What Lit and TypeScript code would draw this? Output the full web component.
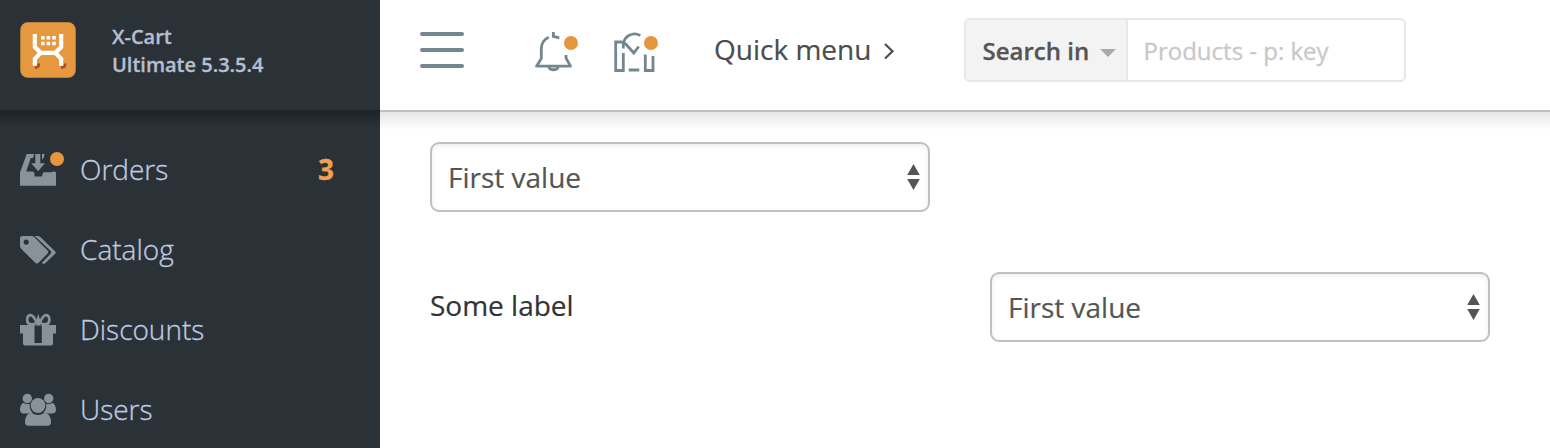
import { LitElement, html, css, svg } from "lit";
import { customElement, property } from "lit/decorators.js";

const icons: Record<string, unknown> = {
  orders: svg`
    <path d="M6.700 3H14.300L13 7H10.800L6.200 20.600H12.800L14.500 22V25.500H21.800L23.300 21.300H31L34.500 20.300L36 21.500V34.800H0V21.500Z"/>
    <path d="M15.300 3H20.300V12.300H24.800L18.200 20.300L11.200 12.300H15.300Z" />
    <path d="M22 3H24.600L23.600 7L22.700 8.300H22Z"/>`,
  catalog: svg`
    <path fill-rule="evenodd" d="M2.200 5H11.500Q13 5 14.200 6L27.500 19.600Q29 21 27.600 22.600L18.300 32Q17 33.200 15.500 31.900L1.600 18.300Q0 16.600 0 15V7.200Q0 5 2.200 5ZM6.200 8.500a2.600 2.600 0 1 0 .01 0Z"/>
    <path d="M14.700 5H17.500Q19.400 5 20.600 6.200L34.700 19.900Q36.700 21.500 34.900 23.100L25.300 32.300Q23.500 33.800 21.800 31.800L30.500 23Q32 21.300 30.500 19.800Z" />`,
  discounts: svg`
    <path fill-rule="evenodd" d="M0 14H36V22.500H33V32.500Q33 34.600 31 34.600H5Q3 34.600 3 32.500V22.500H0ZM14.500 14.600V32H21.800V14.600Z"/>
    <path d="M18.300 13.700C15 8.500 13.600 4.200 10.600 4.200C6.200 4.200 5.900 12.700 10.400 13.100C14.800 13.700 17 12.500 18.300 7.600C19.800 12.500 21.800 13.700 26.200 13.100C30.600 12.700 30.300 4.200 25.900 4.200C22.900 4.200 21.500 8.500 18.300 13.700" fill="none" stroke="currentColor" stroke-width="2.700"/>`,
  users: svg`
    <circle cx="7.300" cy="7.500" r="4.700"/><circle cx="28.700" cy="7.500" r="4.700"/>
    <path d="M3.200 11.800Q7 14 9.700 12.500Q9 19 12.800 21.400Q11 21.600 9.800 22.400H3Q0 21.800 0 18.800Q.2 13.700 3.200 11.800ZM32.800 11.800Q29 14 26.300 12.500Q27 19 23.200 21.400Q25 21.600 26.200 22.400H33Q36 21.800 36 18.800Q35.800 13.700 32.800 11.800Z"/>
    <circle cx="18" cy="14.500" r="7.400"/>
    <path d="M11.500 21.700Q18 26.200 24.500 21.700Q31 22.500 31 31.500Q31 34.800 27 34.800H9Q5 34.800 5 31.500Q5 22.500 11.500 21.700Z"/>`,
};

@customElement("menu-item")
class MenuItem extends LitElement {
  @property() label = "";
  @property() icon = "";
  @property() badge = "";
  static styles = css`
    :host { display: flex; align-items: center; height: 80px; padding: 0 46px 0 20px; color: #c0cbe0; }
    svg { width: 44px; height: 40px; flex: none; color: #8a9299; fill: currentColor; margin-right: 16px; overflow: visible; }
    .label { flex: 1; font-size: 28px; line-height: 40px; font-weight: 300; padding-bottom: 2px; -webkit-text-stroke: .3px #c0cbe0; }
    .badge { color: #f0a04f; font-size: 28px; line-height: 40px; font-weight: 700; padding-bottom: 2px; -webkit-text-stroke: .3px #f0a04f; }
    .dot { fill: #e5963e; }
  `;
  render() {
    return html`<svg viewBox="0 0 44 40"><g transform="translate(0 1)">${icons[this.icon]}</g>
        ${this.badge ? svg`<circle class="dot" cx="37" cy="9" r="7"/>` : ""}</svg>
      <span class="label">${this.label}</span>
      ${this.badge ? html`<span class="badge">${this.badge}</span>` : ""}`;
  }
}

@customElement("value-select")
class ValueSelect extends LitElement {
  static styles = css`
    :host { box-sizing: border-box; display: flex; align-items: center; justify-content: space-between; width: 500px; height: 70px; padding: 0 7px 0 16px; border: 2px solid #c0c0c0; border-radius: 9px; background: #fff; box-shadow: inset 0 2px 5px rgba(0,0,0,.08); font-size: 28px; color: #555; -webkit-text-stroke: .2px #555; }
    svg { width: 14px; height: 28px; fill: #555; }
  `;
  render() {
    return html`<span>First value</span><svg viewBox="0 0 14 28"><path d="M.2 12L6.500 1L12.800 12ZM.2 16H12.800L6.500 27Z"/></svg>`;
  }
}

@customElement("app-root")
class AppRoot extends LitElement {
  static styles = css`
    :host { display: grid; grid-template-columns: 380px 1fr; height: 448px; overflow: hidden; background: #fff; font-family: "Open Sans", sans-serif; }
    aside { background: #2a3238; }
    .brand { display: flex; height: 110px; box-sizing: border-box; padding: 22px 20px 0; color: #b5bfd1; }
    .logo { width: 56px; height: 56px; flex: none; }
    .name { margin: 1px 0 0 36px; font-size: 20px; line-height: 28px; font-weight: 600; -webkit-text-stroke: .3px #b5bfd1; }
    .shade { height: 20px; background: linear-gradient(#1d2326, #222a2e 40%, #2a3238 90%); }
    header { display: flex; align-items: flex-start; height: 112px; box-sizing: border-box; border-bottom: 2px solid #c0c0c0; padding-left: 40px; }
    .burger { display: grid; gap: 12px; margin-top: 32px; width: 44px; }
    .burger i { height: 4px; border-radius: 2px; background: #748791; }
    .alerts { width: 130px; height: 50px; margin: 28px 0 0 66px; fill: none; stroke: #748791; stroke-width: 2.800; }
    .dot { fill: #e5963e; stroke: none; }
    .quick { margin: 29px 0 0 54px; font-size: 28px; line-height: 40px; color: #4c4c4c; white-space: nowrap; width: 158px; -webkit-text-stroke: .2px #4c4c4c; }
    .chev { width: 12px; height: 20px; margin: 41px 0 0 11px; fill: none; stroke: #4c4c4c; stroke-width: 2.200; }
    .search { display: flex; box-sizing: border-box; width: 442px; height: 64px; margin: 18px 0 0 69px; border: 2px solid #e7e7e7; border-radius: 6px; font-size: 24px; line-height: 60px; }
    .scope { display: flex; align-items: center; box-sizing: border-box; width: 162px; flex: none; padding: 1px 0 0 16.5px; border-right: 2px solid #e7e7e7; background: #f3f3f3; color: #555; font-weight: 600; border-radius: 4px 0 0 4px; white-space: nowrap; height: 60px; -webkit-text-stroke: .3px #555; }
    .caret { width: 16px; height: 8px; margin: 5px 0 0 auto; padding-right: 10px; fill: #aaa; }
    .hint { padding-left: 15.5px; padding-top: 1px; color: #c8c8c8; white-space: nowrap; -webkit-text-stroke: .3px #c8c8c8; }
    .fall { height: 18px; background: linear-gradient(#e6e6e6, #fff); }
    .fields { padding: 12px 60px 0 50px; }
    .row { display: flex; justify-content: space-between; margin-top: 60px; }
    .text { font-size: 28px; line-height: 38px; margin-top: 14px; color: #333; -webkit-text-stroke: .2px #333; }
  `;
  render() {
    return html`
      <aside>
        <div class="brand">
          <svg class="logo" viewBox="0 0 56 56">
            <rect x=".3" y=".3" width="55.400" height="55.400" rx="7.500" fill="#e6983f"/>
            <path d="M18.600 41.500Q19.200 45.400 14.800 45.500M44.900 41.500Q45.500 45.400 41.100 45.500" fill="none" stroke="#a94c2a" stroke-width="2.800"/>
            <path d="M14.800 12V25L20.800 30.800H35.200L41.200 25V12M20.800 30.800L14.800 36.800V43.700M35.200 30.800L41.200 36.800V43.700" fill="none" stroke="#fff" stroke-width="4.200"/>
            <path d="M21 14h3.600v3.600H21zM26.600 14h3.600v3.600h-3.600zM32.200 14h3.600v3.600h-3.600zM21 19.700h3.600v3.600H21zM26.600 19.700h3.600v3.600h-3.600zM32.200 19.700h3.600v3.600h-3.600z" fill="#fff"/>
          </svg>
          <div class="name">X-Cart<br>Ultimate 5.3.5.4</div>
        </div>
        <div class="shade"></div>
        <menu-item icon="orders" label="Orders" badge="3"></menu-item>
        <menu-item icon="catalog" label="Catalog"></menu-item>
        <menu-item icon="discounts" label="Discounts"></menu-item>
        <menu-item icon="users" label="Users"></menu-item>
      </aside>
      <main>
        <header>
          <div class="burger"><i></i><i></i><i></i></div>
          <svg class="alerts" viewBox="530 28 130 50">
            <path stroke-linejoin="round" d="M548.700 37.300Q541.300 40.500 541.300 49.500V58.500L536.500 66.200H570.500L566 58V55"/>
            <path d="M553.400 32V36.300L559.300 37.800M548.700 67A5 3.800 0 0 0 558.300 67"/>
            <path d="M623.300 48.500V44.500A11.300 11.300 0 0 1 640.300 35.600"/>
            <path d="M623.300 53V70.500H615.700V42H621Q624 42 626.200 44.500L633.800 53L638.700 46.500M628.700 70H639.300M645.300 54.500V70.500H653V56"/>
            <circle class="dot" cx="571" cy="43" r="7"/><circle class="dot" cx="651" cy="43" r="7"/>
          </svg>
          <div class="quick">Quick menu</div>
          <svg class="chev" viewBox="0 0 12 20"><path d="M2 3L9.500 10.200L2 17.500"/></svg>
          <div class="search">
            <div class="scope">Search in<svg class="caret" viewBox="0 0 16 8"><path d="M0 0H16L8 8Z"/></svg></div>
            <div class="hint">Products - p: key</div>
          </div>
        </header>
        <div class="fall"></div>
        <div class="fields">
          <value-select></value-select>
          <div class="row"><div class="text">Some label</div><value-select></value-select></div>
        </div>
      </main>`;
  }
}
